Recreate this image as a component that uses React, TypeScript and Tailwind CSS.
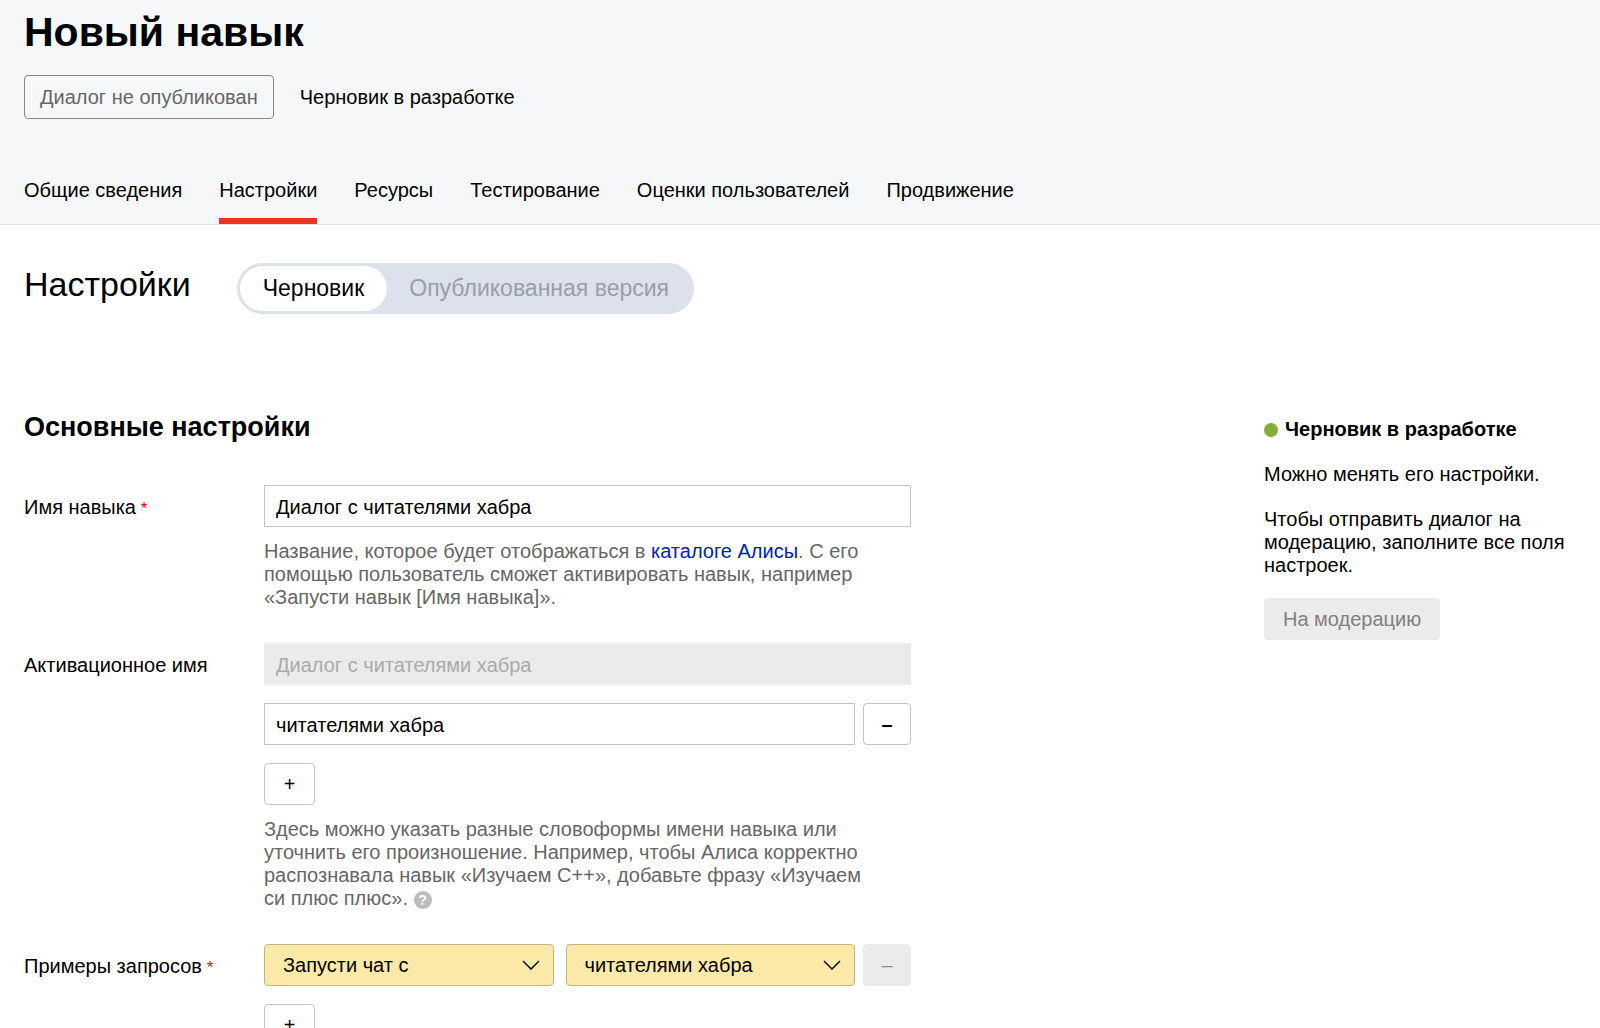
import { useState } from "react";
import type { ReactNode, SelectHTMLAttributes } from "react";

const TABS = [
  "Общие сведения",
  "Настройки",
  "Ресурсы",
  "Тестирование",
  "Оценки пользователей",
  "Продвижение",
];

function Header() {
  return (
    <header className="bg-[#f6f7f9] border-b border-[#e3e4e6] px-6">
      <h1 className="pt-2 text-[41px] leading-[48px] font-bold">Новый навык</h1>
      <div className="mt-[19px] flex items-center gap-[26px]">
        <span className="h-11 px-[15px] flex items-center border border-[#888] rounded text-[#666]">
          Диалог не опубликован
        </span>
        <span>Черновик в разработке</span>
      </div>
      <nav className="mt-[60px] flex gap-[37px]">
        {TABS.map(tab => (
          <a
            key={tab}
            href="#"
            className={
              tab === "Настройки"
                ? "h-[45px] border-b-6 border-[#ef3124]"
                : "h-[45px] border-b-6 border-transparent"
            }
          >
            {tab}
          </a>
        ))}
      </nav>
    </header>
  );
}

function VersionSwitch() {
  const [version, setVersion] = useState("draft");
  const active = "rounded-full bg-white px-[23px] text-black";
  const idle = "rounded-full px-[22px] text-[#9a9ea8]";

  return (
    <div className="h-[51px] p-[3px] flex rounded-full bg-[#dde1ec] text-[23px]">
      <button type="button" onClick={() => setVersion("draft")} className={version === "draft" ? active : idle}>
        Черновик
      </button>
      <button type="button" onClick={() => setVersion("live")} className={version === "live" ? active : idle}>
        Опубликованная версия
      </button>
    </div>
  );
}

function Row({ label, id, required, children }: { label: string; id: string; required?: boolean; children: ReactNode }) {
  return (
    <div className="flex">
      <label htmlFor={id} className="w-[240px] shrink-0 h-11 leading-[44px]">
        {label}
        {required && <span className="text-[17px] text-[#f00]"> *</span>}
      </label>
      <div className="w-[647px]">{children}</div>
    </div>
  );
}

function RemoveButton({ disabled }: { disabled?: boolean }) {
  return (
    <button
      type="button"
      aria-label="Удалить"
      disabled={disabled}
      className="w-12 h-[42px] shrink-0 rounded border border-[#c4c4c4] font-bold disabled:font-normal disabled:border-[#ebebeb] disabled:bg-[#ebebeb] disabled:text-[#8c8c8c]"
    >
      –
    </button>
  );
}

function AddButton() {
  return (
    <button type="button" aria-label="Добавить" className="mt-[18px] block w-[51px] h-[42px] rounded border border-[#c4c4c4]">
      +
    </button>
  );
}

function Select(props: SelectHTMLAttributes<HTMLSelectElement>) {
  return (
    <div className="relative flex-1">
      <select
        {...props}
        className="w-full h-[42px] pl-[18px] pr-10 appearance-none rounded border border-[#c4b483] bg-[#fdeaa8]"
      />
      <svg
        className="absolute right-[14px] top-[16px] pointer-events-none"
        width="18"
        height="10"
        viewBox="0 0 18 10"
        fill="none"
        stroke="#000"
        strokeWidth="1.5"
      >
        <path d="M1 1l8 8 8-8" />
      </svg>
    </div>
  );
}

function Sidebar() {
  return (
    <aside className="w-[312px] shrink-0 pt-1">
      <h3 className="flex items-center gap-[7px] font-bold">
        <span className="size-[14px] rounded-full bg-[#84ad3c]" />
        Черновик в разработке
      </h3>
      <p className="mt-[22px]">Можно менять его настройки.</p>
      <p className="mt-[22px]">Чтобы отправить диалог на модерацию, заполните все поля настроек.</p>
      <button type="button" disabled className="mt-[21px] h-[42px] px-[19px] rounded bg-[#ebebeb] text-[#808080]">
        На модерацию
      </button>
    </aside>
  );
}

export default function App() {
  const [name, setName] = useState("Диалог с читателями хабра");
  const [alias, setAlias] = useState("читателями хабра");

  return (
    <div className="h-screen overflow-y-auto bg-white text-black text-[20px] leading-[23px] font-['Liberation_Sans',Arial,sans-serif] [scrollbar-width:none]">
      <Header />
      <main className="px-6">
        <div className="pt-[38px] flex gap-[46px]">
          <h2 className="text-[34px] leading-[42px]">Настройки</h2>
          <VersionSwitch />
        </div>

        <div className="mt-[100px] flex justify-between">
          <form className="flex flex-col">
            <h2 className="mb-[44px] text-[27px] leading-[27px] font-bold">Основные настройки</h2>

            <div className="flex flex-col gap-[34px] pb-10">
              <Row label="Имя навыка" id="name" required>
                <input
                  id="name"
                  value={name}
                  onChange={e => setName(e.target.value)}
                  className="block w-full h-[42px] px-[11px] pt-[2px] border border-[#c4c4c4]"
                />
                <p className="mt-[13px] text-[#666]">
                  Название, которое будет отображаться в{" "}
                  <a href="#" className="text-[#02b]">каталоге Алисы</a>. С его<br />
                  помощью пользователь сможет активировать навык, например<br />
                  «Запусти навык [Имя навыка]».
                </p>
              </Row>

              <Row label="Активационное имя" id="alias">
                <input
                  disabled
                  aria-label="Имя навыка"
                  value={name}
                  className="block w-full h-[42px] px-3 pt-[2px] bg-[#ebebeb] text-[#aaa]"
                />
                <div className="mt-[18px] flex gap-2">
                  <input
                    id="alias"
                    value={alias}
                    onChange={e => setAlias(e.target.value)}
                    className="flex-1 h-[42px] px-[11px] pt-[2px] border border-[#c4c4c4]"
                  />
                  <RemoveButton />
                </div>
                <AddButton />
                <p className="mt-[13px] text-[#666]">
                  Здесь можно указать разные словоформы имени навыка или<br />
                  уточнить его произношение. Например, чтобы Алиса корректно<br />
                  распознавала навык «Изучаем С++», добавьте фразу «Изучаем<br />
                  си плюс плюс».{" "}
                  <button
                    type="button"
                    className="size-[18px] rounded-full bg-[#bbb] text-white text-[14px] leading-[18px] font-bold"
                  >
                    ?
                  </button>
                </p>
              </Row>

              <Row label="Примеры запросов" id="phrase" required>
                <div className="flex gap-2">
                  <div className="flex-1 flex gap-3">
                    <Select id="phrase">
                      <option>Запусти чат с</option>
                    </Select>
                    <Select aria-label="Имя">
                      <option>читателями хабра</option>
                    </Select>
                  </div>
                  <RemoveButton disabled />
                </div>
                <AddButton />
              </Row>
            </div>
          </form>
          <Sidebar />
        </div>
      </main>
    </div>
  );
}
